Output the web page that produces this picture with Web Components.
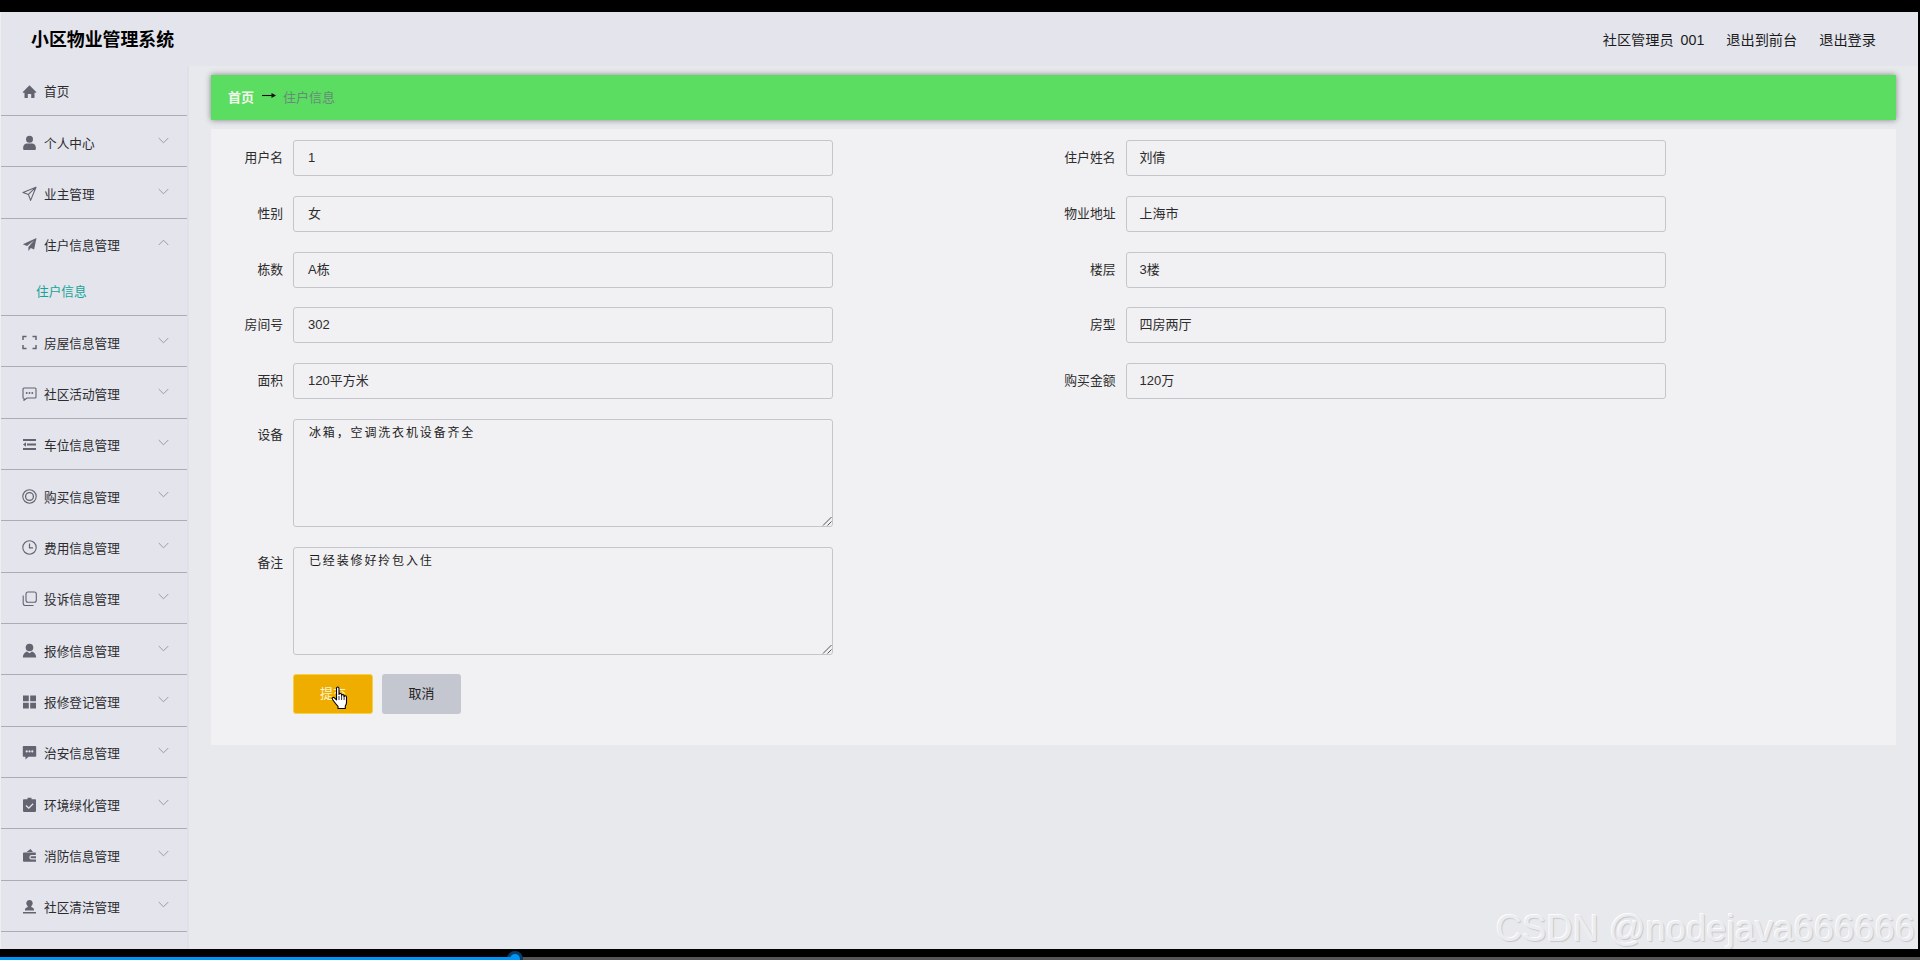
<!DOCTYPE html>
<html lang="zh-CN">
<head>
<meta charset="utf-8">
<title>小区物业管理系统</title>
<style>
html,body{margin:0;padding:0;width:1920px;height:960px;overflow:hidden;background:#000}
body{font-family:"Liberation Sans","Noto Sans CJK SC",sans-serif;font-size:13px;color:#2a2a2a}
</style>
</head>
<body>
<screen-frame>
  <app-header title="小区物业管理系统">
    <span style="word-spacing:3px">社区管理员 001</span><span>退出到前台</span><span>退出登录</span>
  </app-header>
  <app-body>
    <side-menu slot="side">
      <menu-item icon="home" home>首页</menu-item>
      <menu-item icon="user" chevron>个人中心</menu-item>
      <menu-item icon="send-o" chevron>业主管理</menu-item>
      <menu-item icon="send" chevron open sub="住户信息">住户信息管理</menu-item>
      <menu-item icon="full" chevron>房屋信息管理</menu-item>
      <menu-item icon="comment-o" chevron>社区活动管理</menu-item>
      <menu-item icon="list" chevron>车位信息管理</menu-item>
      <menu-item icon="ring" chevron>购买信息管理</menu-item>
      <menu-item icon="clock" chevron>费用信息管理</menu-item>
      <menu-item icon="copy" chevron>投诉信息管理</menu-item>
      <menu-item icon="person" chevron>报修信息管理</menu-item>
      <menu-item icon="grid" chevron>报修登记管理</menu-item>
      <menu-item icon="comment" chevron>治安信息管理</menu-item>
      <menu-item icon="clip" chevron>环境绿化管理</menu-item>
      <menu-item icon="wallet" chevron>消防信息管理</menu-item>
      <menu-item icon="stamp" chevron>社区清洁管理</menu-item>
    </side-menu>
    <crumb-bar home="首页" current="住户信息"></crumb-bar>
    <form-card>
      <form-field label="用户名" wide>1</form-field>
      <form-field label="住户姓名">刘倩</form-field>
      <form-field label="性别" wide>女</form-field>
      <form-field label="物业地址">上海市</form-field>
      <form-field label="栋数" wide>A栋</form-field>
      <form-field label="楼层">3楼</form-field>
      <form-field label="房间号" wide>302</form-field>
      <form-field label="房型">四房两厅</form-field>
      <form-field label="面积" wide>120平方米</form-field>
      <form-field label="购买金额">120万</form-field>
      <form-field label="设备" multi>冰箱，空调洗衣机设备齐全</form-field>
      <form-field label="备注" multi>已经装修好拎包入住</form-field>
      <form-actions>
        <ui-button kind="primary">提交</ui-button>
        <ui-button>取消</ui-button>
      </form-actions>
    </form-card>
  </app-body>
  <hand-cursor></hand-cursor>
  <water-mark>CSDN @nodejava666666</water-mark>
  <video-bar></video-bar>
</screen-frame>

<script>
const ICONS = {
  home:'<path fill="currentColor" d="M7.5 2.300 .8 8.900c-.3.4 0 .8.4.8h1.300v4.800c0 .4.300.7.7.7h2.600v-4.200h3.400v4.200h2.600c.4 0 .7-.3.7-.7V9.700h1.300c.4 0 .7-.4.4-.8z"/>',
  user:'<circle fill="currentColor" cx="7.5" cy="4.2" r="3.5"/><path fill="currentColor" d="M1.200 14.200v-2c0-2.300 2-3.700 3.600-3.700h5.400c1.600 0 3.600 1.400 3.600 3.700v2c0 .5-.3.800-.8.800H2c-.5 0-.8-.3-.8-.8z"/>',
  'send-o':'<path fill="none" stroke="currentColor" stroke-width="1.100" stroke-linejoin="round" d="M14 1.200 1 6.500l5.400 1.900 2.200 6zM6.400 8.400 14 1.200"/>',
  send:'<path fill="currentColor" d="M14.500 1 .8 7.300l4.200 1.700L12 3.500 6.400 9.900v4.100l2.400-2.900 3.300 1.400z"/>',
  full:'<path fill="none" stroke="currentColor" stroke-width="1.500" d="M1 5V1.500h3.500M10.500 1.500H14V5M14 10v3.500h-3.500M4.500 13.500H1V10"/>',
  'comment-o':'<path fill="none" stroke="currentColor" stroke-width="1.100" d="M2 2h11a1 1 0 0 1 1 1v8a1 1 0 0 1-1 1H5l-3 2.300V12.500H2a1 1 0 0 1-1-1V3a1 1 0 0 1 1-1z"/><g fill="currentColor"><circle cx="4.700" cy="7" r=".95"/><circle cx="7.500" cy="7" r=".95"/><circle cx="10.300" cy="7" r=".95"/></g>',
  list:'<path fill="none" stroke="currentColor" stroke-width="1.800" d="M1 3h13M5 7.500h9M1 12h13"/><path fill="currentColor" d="M1 7.500 4 5.300v4.400z"/>',
  ring:'<circle fill="none" stroke="currentColor" stroke-width="1.100" cx="7.500" cy="7.500" r="6.700"/><circle fill="none" stroke="currentColor" stroke-width="1.300" cx="7.500" cy="7.500" r="3.900"/>',
  clock:'<circle fill="none" stroke="currentColor" stroke-width="1.100" cx="7.500" cy="7.500" r="6.700"/><path fill="none" stroke="currentColor" stroke-width="1.200" d="M7.500 3.400v4.400h3.500"/>',
  copy:'<rect fill="none" stroke="currentColor" stroke-width="1.100" x="4" y="1" width="10.300" height="10.300" rx="2"/><path fill="none" stroke="currentColor" stroke-width="1.100" d="M1.200 4.500v8c0 1.100.9 2 2 2h8.300"/>',
  person:'<circle fill="currentColor" cx="7.500" cy="4.500" r="3.800"/><path fill="currentColor" d="M.8 14.500c0-3.300 2.200-5.400 4.200-6l2.500 1.800L10 8.500c2 .6 4.200 2.700 4.200 6z"/>',
  grid:'<path fill="currentColor" d="M1 1.500h5.800v5.800H1zM8.200 1.500H14v5.800H8.200zM1 8.700h5.800v5.800H1zM8.200 8.700H14v5.800H8.200z"/>',
  comment:'<path fill="currentColor" fill-rule="evenodd" d="M1.800 1h11.400c.6 0 1 .4 1 1v8.800c0 .6-.4 1-1 1H6.500L3.500 14.500v-2.700H1.800c-.6 0-1-.4-1-1V2c0-.6.4-1 1-1zM4.700 5.300a1.100 1.100 0 1 0 0 2.200 1.100 1.100 0 0 0 0-2.200zm2.800 0a1.100 1.100 0 1 0 0 2.200 1.100 1.100 0 0 0 0-2.200zm2.800 0a1.100 1.100 0 1 0 0 2.200 1.100 1.100 0 0 0 0-2.200z"/>',
  clip:'<path fill="currentColor" fill-rule="evenodd" d="M5.500 .8h4v1.500h3.700c.5 0 .8.300.8.800v11c0 .5-.3.800-.8.800H1.800c-.5 0-.8-.3-.8-.8v-11c0-.5.300-.8.800-.8h3.700zM10.700 6.300 6.800 10.200 4.400 8 3.500 8.900l3.300 3 4.800-4.700z"/>',
  wallet:'<path fill="currentColor" fill-rule="evenodd" d="M1.800 4.500h12v2.600H9.500a2.200 2.200 0 1 0 0 4.400H14v2.300H1.800c-.5 0-.8-.3-.8-.8V5.300c0-.5.300-.8.800-.8zM4.500 4l4-3 2.500 3zM9.500 8.300H14v2H9.500a1 1 0 0 1 0-2z"/>',
  stamp:'<path fill="currentColor" d="M7.500 1a3.300 3.300 0 0 0-2 5.900c.4.400.4 1-.1 1.400-.8.500-2.400.6-2.400 2.400v.8h9v-.8c0-1.800-1.600-1.900-2.400-2.400-.5-.4-.5-1-.1-1.400A3.300 3.300 0 0 0 7.500 1zM1 13h13v1.400H1z"/>'
};

class Base extends HTMLElement{
  constructor(){ super(); this.attachShadow({mode:'open'}); }
  render(html){ this.shadowRoot.innerHTML = html; }
}

customElements.define('screen-frame', class extends Base{
  connectedCallback(){ this.render(`<style>
    :host{display:flex;flex-direction:column;position:relative;width:1920px;height:960px;background:#000;overflow:hidden;box-sizing:border-box;padding-top:12px}
    .app{width:1918px;height:937px;display:flex;flex-direction:column;background:#e8e9ed;border-left:1px solid #eeeef1;box-sizing:border-box;overflow:hidden}
  </style><div class="app"><slot></slot></div><slot name="bar"></slot>`);
  const bar=this.querySelector('video-bar'); if(bar) bar.slot='bar'; }
});

customElements.define('app-header', class extends Base{
  connectedCallback(){ this.render(`<style>
    :host{display:flex;flex:none;height:54px;align-items:center;justify-content:space-between;background:#e3e4ec;padding:0 42px 0 30px;box-sizing:border-box}
    h1{margin:0;font-size:17.900px;font-weight:700;color:#000;line-height:54px;position:relative;top:1px}
    nav{display:flex;gap:22px;font-size:14.200px;color:#1c1c1c}
  </style><h1>${this.getAttribute('title')}</h1><nav><slot></slot></nav>`); }
});

customElements.define('app-body', class extends Base{
  connectedCallback(){ this.render(`<style>
    :host{display:flex;flex:1;min-height:0}
    .side{flex:none;width:186px;border-right:2px solid #e0e1e6;overflow:hidden}
    main{flex:1;min-width:0;padding:9px 22px 0 22px;display:flex;flex-direction:column;gap:9px}
  </style><div class="side"><slot name="side"></slot></div><main><slot></slot></main>`); }
});

customElements.define('side-menu', class extends Base{
  connectedCallback(){ this.render(`<style>
    :host{display:flex;flex-direction:column;background:#e3e4ec;height:100%}
  </style><slot></slot>`); }
});

customElements.define('menu-item', class extends Base{
  connectedCallback(){
    const open=this.hasAttribute('open'), sub=this.getAttribute('sub'), chev=this.hasAttribute('chevron');
    const h=this.hasAttribute('home');
    this.render(`<style>
      :host{display:block;flex:none;border-bottom:1px solid #acacb6;box-sizing:border-box;color:#2c2c30;font-size:12.650px}
      .row{display:flex;align-items:center;height:${h?'49px':'50.33px'};padding:${h?'0':'2px'} 0 0 21px;box-sizing:border-box;position:relative}
      svg.ic{width:15px;height:15px;color:#63646f;flex:none;margin-right:7px}
      .label{flex:1}
      svg.ch{width:11px;height:7px;flex:none;margin:0 18px 0 0;position:relative;top:-2px;color:#9a9aa4}
      .sub{height:46px;padding:0 0 0 35px;display:flex;align-items:center;color:#14a596;font-size:12.650px;position:relative;top:-1px}
    </style>
    <div class="row">
      <svg class="ic" viewBox="0 0 15 15">${ICONS[this.getAttribute('icon')]||''}</svg>
      <span class="label"><slot></slot></span>
      ${chev?`<svg class="ch" viewBox="0 0 11 7"><path fill="none" stroke="currentColor" d="${open?'M.7 6 5.500 1.200 10.300 6':'M.7 1 5.500 5.800 10.300 1'}"/></svg>`:''}
    </div>
    ${sub?`<div class="sub">${sub}</div>`:''}`);
  }
});

customElements.define('crumb-bar', class extends Base{
  connectedCallback(){ this.render(`<style>
    :host{display:flex;flex:none;align-items:center;height:45px;background:#5bdd62;box-shadow:0 0 6px rgba(0,0,0,.45);padding:0 0 2px 17px;box-sizing:border-box;font-size:13px}
    b{color:#f4f7ee;font-weight:700}
    svg{width:14px;height:9px;margin:0 7px 0 8px;flex:none;position:relative;top:-1px}
    span{color:#668c78}
  </style><b>${this.getAttribute('home')}</b><svg viewBox="0 0 14 9"><path d="M0 4.500h12" stroke="#0c0c0c" stroke-width="1.100"/><path d="M14 4.500 9.500 2v5z" fill="#0c0c0c"/></svg><span>${this.getAttribute('current')}</span>`); }
});

customElements.define('form-card', class extends Base{
  connectedCallback(){ this.render(`<style>
    :host{display:grid;flex:none;grid-template-columns:832.500px 842.500px;row-gap:19.750px;background:#f1f0f3;padding:11px 0 31px 10px;box-sizing:border-box;height:616px;align-content:start}
  </style><slot></slot>`); }
});

customElements.define('form-field', class extends Base{
  connectedCallback(){
    const multi=this.hasAttribute('multi');
    const pad=this.hasAttribute('wide')?'14px':'13px';
    this.render(`<style>
      :host{display:flex;align-items:flex-start;${multi?'grid-column:1 / 2;':''}}
      label{flex:none;width:72px;padding-right:10px;box-sizing:border-box;text-align:right;font-size:12.800px;color:#2c2c2c;line-height:${multi?'32px':'36px'}}
      .box{position:relative;width:540px;height:${multi?'108px':'36px'};box-sizing:border-box;border:1px solid #c5c5cc;border-radius:3px;background:#f1f0f3;color:#2c2c2c;
        ${multi?'padding:5px 15px;font:12px/18px "Liberation Mono","Noto Sans CJK SC",monospace;letter-spacing:1.850px;color:#1c1c1c':`padding:0 ${pad};font-size:13px;line-height:34px`}}
      svg{position:absolute;right:0;bottom:0;width:10px;height:10px}
    </style><label>${this.getAttribute('label')}</label><div class="box"><slot></slot>${multi?'<svg viewBox="0 0 10 10"><path d="M1 9.500 9.500 1M5.500 9.500 9.500 5.500" stroke="#555" fill="none"/></svg>':''}</div>`);
  }
});

customElements.define('form-actions', class extends Base{
  connectedCallback(){ this.render(`<style>
    :host{display:flex;grid-column:1 / 2;gap:9px;padding-left:72px}
  </style><slot></slot>`); }
});

customElements.define('ui-button', class extends Base{
  connectedCallback(){
    const p=this.getAttribute('kind')==='primary';
    this.render(`<style>
      :host{display:flex;align-items:center;justify-content:center;width:${p?'80px':'79px'};height:40px;box-sizing:border-box;border-radius:3px;font-size:13px;padding-bottom:3px;
      ${p?'background:#efad00;color:#fdf3d0;border:1px solid #f3cf4a':'background:#c4c6d0;color:#222'}}
    </style><slot></slot>`);
  }
});

customElements.define('hand-cursor', class extends Base{
  connectedCallback(){ this.render(`<style>
    :host{position:absolute;left:331px;top:686px;width:19px;height:24px;display:block}
    svg{width:100%;height:100%;display:block}
  </style><svg viewBox="0 0 19 24"><path fill="#fff" stroke="#000" stroke-width="1.100" stroke-linejoin="round" d="M5.500 2.200c0-1.600 2.500-1.600 2.500 0v6.300c.2-1.300 2.400-1.300 2.600 0v1c.2-1.200 2.300-1.200 2.500.2v.8c.3-1.100 2.300-1 2.400.4v5.500c0 1.600-.5 2.500-1.200 3.600v2.500H7v-2.200C5.500 19 3.700 16.300 1.500 13.500c-1-1.500.8-2.800 2-1.600l2 2z"/><path stroke="#000" stroke-width=".8" d="M8 10v4M10.600 10v4M13.100 10v4" fill="none"/></svg>`); }
});

customElements.define('water-mark', class extends Base{
  connectedCallback(){ this.render(`<style>
    :host{position:absolute;left:1496px;top:908px;display:block;font:36px/42px "Liberation Sans",sans-serif;letter-spacing:.220px;white-space:nowrap;color:#ebecf0;
      text-shadow:1px 1px 1px rgba(0,0,0,.15),-1px -1px 0 rgba(255,255,255,.9)}
  </style><slot></slot>`); }
});

customElements.define('video-bar', class extends Base{
  connectedCallback(){ this.render(`<style>
    :host{position:absolute;left:0;right:0;bottom:0;height:3px;display:block;background:#555}
    .fill{position:absolute;left:0;top:0;bottom:0;width:518px;background:#0094f5}
    .halo{position:absolute;left:507px;top:-6px;width:16px;height:16px;border-radius:50%;background:#0a3c66}
    .dot{position:absolute;left:510px;top:-3px;width:10px;height:10px;border-radius:50%;background:#0094f5}
  </style><div class="halo"></div><div class="fill"></div><div class="dot"></div>`); }
});
</script>
</body>
</html>
